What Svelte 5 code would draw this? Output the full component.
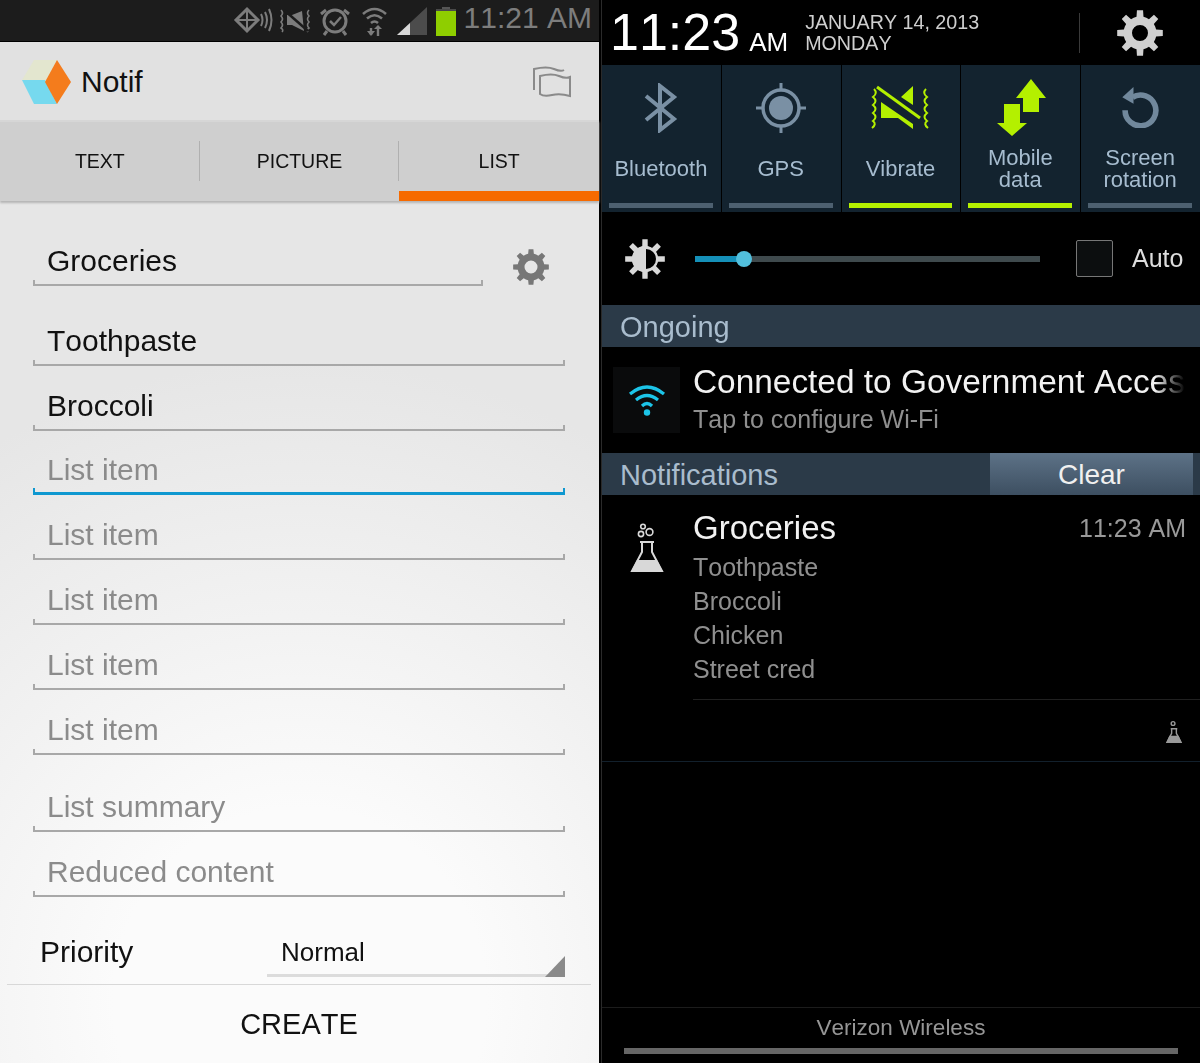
<script>
    const emptyItems = ["List item", "List item", "List item", "List item"];
    const tabs = ["TEXT", "PICTURE", "LIST"];
    const toggles = [
        { id: "bt", label: ["Bluetooth"], on: false },
        { id: "gps", label: ["GPS"], on: false },
        { id: "vib", label: ["Vibrate"], on: true },
        { id: "data", label: ["Mobile", "data"], on: true },
        { id: "rot", label: ["Screen", "rotation"], on: false },
    ];
    const lines = ["Toothpaste", "Broccoli", "Chicken", "Street cred"];

    // gear outline with a round hole
    function gear(teeth, ro, ri, hole) {
        let d = "";
        const step = (Math.PI * 2) / teeth;
        for (let i = 0; i < teeth; i++) {
            const a = i * step;
            const pts = [
                [ri, a - step * 0.5],
                [ri, a - step * 0.27],
                [ro, a - step * 0.17],
                [ro, a + step * 0.17],
                [ri, a + step * 0.27],
            ];
            for (const [r, t] of pts) {
                d += (d ? "L" : "M") + (r * Math.cos(t)).toFixed(2) + " " + (r * Math.sin(t)).toFixed(2);
            }
        }
        d += `Z M${hole} 0 A${hole} ${hole} 0 1 0 ${-hole} 0 A${hole} ${hole} 0 1 0 ${hole} 0Z`;
        return d;
    }
</script>

<div class="page">
    <section class="left">
        <div class="statusbar">
            <svg class="st-icons" width="200" height="41" viewBox="0 0 200 41">
                <g fill="none" stroke="#7c7c7c">
                    <path d="M15 9 L26 20 L15 31 L4 20 Z" stroke-width="3" />
                    <path d="M4 20 H26 M15 9 V31" stroke-width="2" />
                    <path d="M29 14 Q32 20 29 26 M33 12 Q37 20 33 28 M37 9 Q42 20 37 31" stroke-width="2" />
                    <path d="M49 10 Q52 13 49 16 Q52 19 49 22 Q52 25 49 28 Q52 30 50 32 M77 10 Q74 13 77 16 Q74 19 77 22 Q74 25 77 28 Q74 30 76 32" stroke-width="1.6" />
                    <circle cx="103" cy="21" r="11" stroke-width="3" />
                    <path d="M98 21 L102 25 L109 17" stroke-width="2.5" />
                    <path d="M94 10 L89 14 M112 10 L117 14 M95 31 L92 35 M111 31 L114 35" stroke-width="3" />
                    <path d="M131 14 Q142.500 4 154 14 M135 18.500 Q142.500 12 150 18.500 M139 23 Q142.500 20 146 23" stroke-width="2.6" />
                    <path d="M146 36 V28 M139 28 V35" stroke-width="2.4" />
                </g>
                <path d="M55 15 H60 L70 11 L72 31 L60 25 H55 Z" fill="#7c7c7c" />
                <path d="M52 10 L76 31" stroke="#1c1c1c" stroke-width="2.5" />
                <path d="M142 29 L146 25 L150 29 Z M135 31 L139 36 L143 31 Z" fill="#7c7c7c" />
                <path d="M165 35 L195 7 V35 Z" fill="#4c4c4c" />
                <path d="M165 35 L178 23 V35 Z" fill="#d8d8d8" />
            </svg>
            <svg class="batt" width="20" height="29" viewBox="0 0 20 29">
                <rect x="6" y="0" width="8" height="4" fill="#555" />
                <rect x="0" y="2" width="20" height="4" fill="#4a4a4a" />
                <rect x="0" y="4" width="20" height="25" fill="#8fce00" />
            </svg>
            <span class="st-time">11:21 AM</span>
        </div>

        <header class="actionbar">
            <svg width="52" height="48" viewBox="0 0 52 48">
                <path d="M1 22 L13 2 H36 L24 24 Z" fill="#e3e6cf" />
                <path d="M1 22 H24 L36 46 H13 Z" fill="#76d9ee" />
                <path d="M36 2 L50 24 L36 46 L24 24 Z" fill="#f47c1c" />
            </svg>
            <span class="app-title">Notif</span>
            <svg class="flag" width="40" height="32" viewBox="0 0 40 32" fill="none" stroke="#8a8a8a" stroke-width="2">
                <path d="M2 24 V3 Q15 0 22 3 T32 4" />
                <path d="M8 10 Q20 7 27 10 T38 11 V30 Q28 27 20 29 T8 28 Z" />
            </svg>
        </header>

        <nav class="tabs">
            {#each tabs as tab, i}
                <div class="tab" class:active={i === 2}>{tab}</div>
            {/each}
        </nav>

        <div class="form">
            <div class="title-row">
                <div class="field title-field"><span>Groceries</span></div>
                <svg class="cog" width="36" height="36" viewBox="-18 -18 36 36">
                    <path d={gear(8, 18, 13.5, 6.5)} fill="#777" fill-rule="evenodd" />
                </svg>
            </div>
            <div class="field first"><span>Toothpaste</span></div>
            <div class="field"><span>Broccoli</span></div>
            <div class="field hint focused"><span>List item</span></div>
            {#each emptyItems as item}
                <div class="field hint"><span>{item}</span></div>
            {/each}
            <div class="field hint summary"><span>List summary</span></div>
            <div class="field hint"><span>Reduced content</span></div>
            <div class="priority">
                <span class="prio-label">Priority</span>
                <div class="spinner">
                    <span>Normal</span>
                    <i class="corner"></i>
                </div>
            </div>
            <button class="create">CREATE</button>
        </div>
    </section>

    <section class="right">
        <div class="clock-row">
            <span class="clock">11:23</span>
            <span class="ampm">AM</span>
            <div class="date">
                <div>JANUARY 14, 2013</div>
                <div>MONDAY</div>
            </div>
            <div class="clock-gear">
                <svg width="46" height="46" viewBox="-23 -23 46 46">
                    <path d={gear(8, 23, 16.5, 8)} fill="#d0d0d0" fill-rule="evenodd" />
                </svg>
            </div>
        </div>

        <div class="toggles">
            {#each toggles as t}
                <div class="toggle" class:on={t.on}>
                    <div class="t-icon">
                        {#if t.id === "bt"}
                            <svg width="36" height="50" viewBox="0 0 36 50" fill="none" stroke="#7a90a4" stroke-width="4">
                                <path d="M3 13 L31 36 L17 47 V3 L31 14 L3 37" />
                            </svg>
                        {:else if t.id === "gps"}
                            <svg width="50" height="50" viewBox="0 0 50 50">
                                <circle cx="25" cy="25" r="12" fill="#7a90a4" />
                                <circle cx="25" cy="25" r="18" fill="none" stroke="#7a90a4" stroke-width="3.5" />
                                <path d="M25 0 V7 M25 43 V50 M0 25 H7 M43 25 H50" stroke="#7a90a4" stroke-width="3" />
                            </svg>
                        {:else if t.id === "vib"}
                            <svg width="62" height="46" viewBox="0 0 62 46" fill="none" stroke="#b4f000">
                                <path d="M5 4 Q9 8 4 12 Q9 16 4 20 Q9 24 4 28 Q9 32 4 36 Q8 39 3 43 M57 4 Q53 8 58 12 Q53 16 58 20 Q53 24 58 28 Q53 32 58 36 Q54 39 59 43" stroke-width="2" />
                                <path d="M8 2 L51 33" stroke-width="3" />
                                <path d="M44 1 V20 L32 12 Z M12 17 L44 39 V44 L29 33 H12 Z" fill="#b4f000" stroke="none" />
                            </svg>
                        {:else if t.id === "data"}
                            <svg class="data-arrows" width="50" height="57" viewBox="0 0 50 57" fill="#b4f000">
                                <path d="M34 0 L49 19 H42 V33 H26 V19 H19 Z" />
                                <path d="M7 25 H23 V44 H30 L15 57 L0 44 H7 Z" />
                            </svg>
                        {:else}
                            <svg width="38" height="41" viewBox="0 0 40 44" fill="none">
                                <path d="M12 11 A16.5 16.5 0 1 1 4 25" stroke="#71889c" stroke-width="6" />
                                <path d="M13 0 V18 L1 11 Z" fill="#71889c" />
                            </svg>
                        {/if}
                    </div>
                    <div class="t-label">
                        {#each t.label as word}<div>{word}</div>{/each}
                    </div>
                    <div class="t-bar"></div>
                </div>
            {/each}
        </div>

        <div class="brightness">
            <svg width="42" height="42" viewBox="-21 -21 42 42">
                <path d={gear(8, 20, 13, 0)} fill="#d8d8d8" />
                <circle r="13" fill="#d8d8d8" />
                <path d="M1 -10 A10 10 0 0 1 1 10 Z" fill="#000" />
            </svg>
            <div class="slider">
                <div class="fill" style="width: {49}px"></div>
                <div class="thumb"></div>
            </div>
            <div class="check"></div>
            <span class="auto">Auto</span>
        </div>

        <div class="section-head">Ongoing</div>
        <div class="ongoing">
            <div class="wifi-box">
                <svg width="38" height="34" viewBox="0 0 38 34" fill="none" stroke="#1cc4e8" stroke-width="3.2">
                    <path d="M2 11 Q19 -3 36 11 M8 17 Q19 8 30 17 M14 23 Q19 18 24 23" />
                    <circle cx="19" cy="29.500" r="3.2" fill="#1cc4e8" stroke="none" />
                </svg>
            </div>
            <div class="ongoing-text">
                <div class="big-line wide">Connected to Government Access</div>
                <div class="sub-line">Tap to configure Wi-Fi</div>
            </div>
        </div>

        <div class="section-head notif-head">
            <span>Notifications</span>
            <div class="clear">Clear</div>
        </div>

        <div class="notif">
            <svg class="flask" width="34" height="50" viewBox="0 0 34 50">
                <g fill="none" stroke="#d8d8d8" stroke-width="1.6">
                    <circle cx="13" cy="3.500" r="2.3" />
                    <circle cx="11" cy="11" r="2.6" />
                    <circle cx="19.500" cy="9" r="3.4" />
                    <path d="M10 19 H24 M12 19 V29 L2 48 H32 L22 29 V19" stroke-width="2" />
                </g>
                <path d="M7 37 H27 L33 49 H1 Z" fill="#d8d8d8" />
            </svg>
            <div class="notif-body">
                <div class="notif-top">
                    <span class="big-line">Groceries</span>
                    <span class="when">11:23 AM</span>
                </div>
                {#each lines as line}
                    <div class="sub-line item">{line}</div>
                {/each}
                <div class="notif-foot">
                    <svg width="16" height="25" viewBox="0 0 34 50">
                        <g fill="none" stroke="#999" stroke-width="3">
                            <circle cx="15" cy="8" r="4" />
                            <path d="M10 19 H24 M12 19 V29 L2 48 H32 L22 29 V19" />
                        </g>
                        <path d="M7 34 H27 L33 49 H1 Z" fill="#999" />
                    </svg>
                </div>
            </div>
        </div>

        <footer class="carrier">
            <div class="carrier-name">Verizon Wireless</div>
            <div class="handle"></div>
        </footer>
    </section>
</div>

<style>
    :global(body) {
        margin: 0;
        background: #000;
    }

    .page {
        display: flex;
        width: 1200px;
        height: 1063px;
        overflow: hidden;
        font-family: "Liberation Sans", Arial, sans-serif;
        font-kerning: none;
        filter: blur(0.4px);
    }

    .left {
        width: 599px;
        display: flex;
        flex-direction: column;
        background: radial-gradient(ellipse 620px 640px at 300px 1000px, #fbfbfb 30%, #e6e6e6 100%);
    }

    .right {
        width: 598px;
        margin-left: 3px;
        background: #000;
        display: flex;
        flex-direction: column;
        box-shadow: -1px 0 0 #2a2a2a;
    }

    .statusbar {
        height: 41px;
        flex: none;
        background: #1c1c1c;
        border-bottom: 1px solid #000;
        display: flex;
        align-items: center;
        justify-content: flex-end;
        padding-right: 7px;
    }

    .st-icons {
        margin-right: 4px;
    }

    .batt {
        margin-right: 8px;
        margin-top: 2px;
    }

    .st-time {
        font-size: 30px;
        color: #7d7d7d;
        margin-top: -6px;
    }

    .actionbar {
        height: 78px;
        box-sizing: border-box;
        padding: 2px 27px 0 21px;
        flex: none;
        background: #e1e1e1;
        display: flex;
        align-items: center;
    }

    .app-title {
        font-size: 30px;
        color: #111;
        margin-left: 8px;
        flex: 1;
    }

    .tabs {
        height: 81px;
        flex: none;
        display: flex;
        background: #cfcfcf;
        border-top: 2px solid #d6d6d6;
        box-sizing: border-box;
        box-shadow: 0 2px 2px #b5b5b5;
    }

    .tab {
        flex: 1;
        position: relative;
        font-size: 19.5px;
        color: #111;
        display: flex;
        align-items: center;
        justify-content: center;
        padding-top: 1px;
        margin-bottom: 2px;
    }

    .tab:not(:last-child)::after {
        content: "";
        position: absolute;
        right: 0;
        top: 19px;
        height: 40px;
        width: 1px;
        background: #b0b0b0;
    }

    .tab.active {
        border-bottom: 10px solid #f66a00;
        margin-bottom: 0;
        padding-top: 9px;
    }

    .form {
        flex: 1;
        display: flex;
        flex-direction: column;
        padding: 0 34px 0 33px;
        min-height: 0;
    }

    .title-row {
        display: flex;
        align-items: flex-end;
        gap: 30px;
        margin-top: 45px;
        padding-right: 16px;
    }

    .cog {
        flex: none;
        margin-bottom: 1px;
    }

    .field {
        height: 64.8px;
        box-sizing: border-box;
        display: flex;
        align-items: flex-end;
        padding: 0 14px 8px;
        font-size: 30px;
        color: #111;
        flex: none;
        background:
            linear-gradient(#a8a8a8, #a8a8a8) left bottom / 100% 2px no-repeat,
            linear-gradient(#a8a8a8, #a8a8a8) left bottom / 2px 6px no-repeat,
            linear-gradient(#a8a8a8, #a8a8a8) right bottom / 2px 6px no-repeat;
    }

    .field.title-field {
        height: 40px;
        flex: 1;
    }

    .field.first {
        margin-top: 15px;
    }

    .field.hint {
        color: #8b8b8b;
    }

    .field.focused {
        background:
            linear-gradient(#0f98d0, #0f98d0) left bottom / 100% 3px no-repeat,
            linear-gradient(#0f98d0, #0f98d0) left bottom / 2px 7px no-repeat,
            linear-gradient(#0f98d0, #0f98d0) right bottom / 2px 7px no-repeat;
    }

    .field.summary {
        margin-top: 13px;
    }

    .priority {
        display: flex;
        align-items: flex-end;
        height: 80px;
        box-sizing: border-box;
        margin: 0 0 0 7px;
        flex: none;
    }

    .prio-label {
        font-size: 30px;
        color: #111;
        width: 227px;
        padding-bottom: 8px;
    }

    .spinner {
        flex: 1;
        position: relative;
        height: 44px;
        box-sizing: border-box;
        border-bottom: 3px solid #dcdcdc;
        font-size: 26px;
        color: #111;
        padding: 4px 0 0 14px;
    }

    .corner {
        position: absolute;
        right: 0;
        bottom: -3px;
        width: 0;
        height: 0;
        border-style: solid;
        border-width: 0 0 21px 20px;
        border-color: transparent transparent #8a8a8a transparent;
    }

    .create {
        flex: 1;
        margin: 7px -26px 0;
        padding: 1px 0 0;
        border: 0;
        border-top: 1px solid #d8d8d8;
        background: none;
        font-family: inherit;
        font-kerning: inherit;
        font-size: 29px;
        color: #111;
    }

    .clock-row {
        height: 65px;
        flex: none;
        display: flex;
        align-items: flex-end;
        padding-left: 8px;
        color: #fff;
    }

    .clock {
        font-size: 52px;
        line-height: 60px;
        margin-bottom: 3px;
    }

    .ampm {
        font-size: 26px;
        line-height: 30px;
        margin: 0 0 8px 9px;
    }

    .date {
        margin: 0 0 11px 17px;
        font-size: 19.7px;
        line-height: 21px;
        color: #cfcfcf;
        flex: 1;
    }

    .clock-gear {
        width: 120px;
        height: 40px;
        margin: 0 0 12px;
        border-left: 1px solid #3a3a3a;
        display: flex;
        align-items: center;
        justify-content: center;
    }

    .toggles {
        height: 147px;
        flex: none;
        display: flex;
    }

    .toggle {
        flex: 1;
        background: #13232f;
        display: flex;
        flex-direction: column;
        align-items: center;
        border-right: 1px solid #000;
        padding: 0 8px 0 7px;
    }

    .toggle:last-child {
        border-right: 0;
    }

    .t-icon {
        height: 79px;
        display: flex;
        align-items: center;
        justify-content: center;
        margin-top: 3px;
    }

    .data-arrows {
        margin-left: 3px;
    }

    .t-label {
        flex: 1;
        display: flex;
        flex-direction: column;
        justify-content: center;
        text-align: center;
        font-size: 22px;
        line-height: 22px;
        color: #a6bccf;
        padding-bottom: 12px;
    }

    .t-bar {
        width: 100%;
        height: 5px;
        background: #4d6070;
        margin-bottom: 4px;
    }

    .toggle.on .t-bar {
        background: #b4f000;
    }

    .brightness {
        height: 93px;
        flex: none;
        display: flex;
        align-items: center;
        padding: 0 15px 0 22px;
        color: #ddd;
    }

    .slider {
        width: 345px;
        height: 6px;
        background: #3f4a4d;
        margin-left: 29px;
        position: relative;
    }

    .fill {
        height: 100%;
        background: #1590b8;
    }

    .thumb {
        position: absolute;
        left: 41px;
        top: -5px;
        width: 16px;
        height: 16px;
        border-radius: 50%;
        background: #52bfdc;
    }

    .check {
        width: 35px;
        height: 35px;
        border: 1px solid #777;
        border-radius: 2px;
        background: #0c0e0f;
        margin-left: 36px;
    }

    .auto {
        font-size: 25px;
        margin-left: 19px;
    }

    .section-head {
        height: 42px;
        flex: none;
        box-sizing: border-box;
        background: #2b3a48;
        color: #a9bccd;
        font-size: 29px;
        line-height: 44px;
        padding-left: 18px;
    }

    .ongoing {
        height: 106px;
        flex: none;
        display: flex;
        align-items: center;
        padding: 0 15px 0 11px;
    }

    .wifi-box {
        width: 67px;
        height: 66px;
        flex: none;
        background: #0a0b0c;
        display: flex;
        align-items: center;
        justify-content: center;
    }

    .ongoing-text {
        margin-left: 13px;
        min-width: 0;
        flex: 1;
        overflow: hidden;
        margin-top: -2px;
    }

    .big-line {
        font-size: 33px;
        line-height: 40px;
        color: #f2f2f2;
        white-space: nowrap;
        -webkit-mask-image: linear-gradient(to left, transparent 0, #000 30px);
    }

    .big-line.wide {
        font-size: 33.4px;
    }

    .sub-line {
        font-size: 25px;
        line-height: 35px;
        color: #8f8f8f;
    }

    .notif-head {
        display: flex;
        justify-content: space-between;
        padding-right: 7px;
    }

    .clear {
        width: 203px;
        background: linear-gradient(#5d7287, #3d4f61);
        color: #f0f0f0;
        text-align: center;
        font-size: 28px;
    }

    .notif {
        flex: none;
        display: flex;
        height: 267px;
        box-sizing: border-box;
        border-bottom: 1px solid #12202c;
        padding-left: 28px;
    }

    .flask {
        flex: none;
        margin-top: 28px;
    }

    .notif-body {
        flex: 1;
        margin-left: 29px;
        padding-top: 13px;
    }

    .notif-top {
        display: flex;
        justify-content: space-between;
        align-items: center;
        padding-right: 14px;
        margin-bottom: 2px;
    }

    .notif-top .big-line {
        -webkit-mask-image: none;
    }

    .when {
        font-size: 25px;
        color: #999;
    }

    .item {
        line-height: 34px;
    }

    .notif-foot {
        margin-top: 13px;
        border-top: 1px solid #202020;
        height: 63px;
        display: flex;
        align-items: center;
        justify-content: flex-end;
        padding: 0 18px 0 0;
    }

    .carrier {
        margin-top: auto;
        height: 56px;
        flex: none;
        box-sizing: border-box;
        border-top: 1px solid #1c1c1c;
        display: flex;
        flex-direction: column;
        align-items: center;
    }

    .carrier-name {
        font-size: 22.5px;
        line-height: 40px;
        color: #969696;
    }

    .handle {
        width: 554px;
        height: 6px;
        background: #666;
    }
</style>
